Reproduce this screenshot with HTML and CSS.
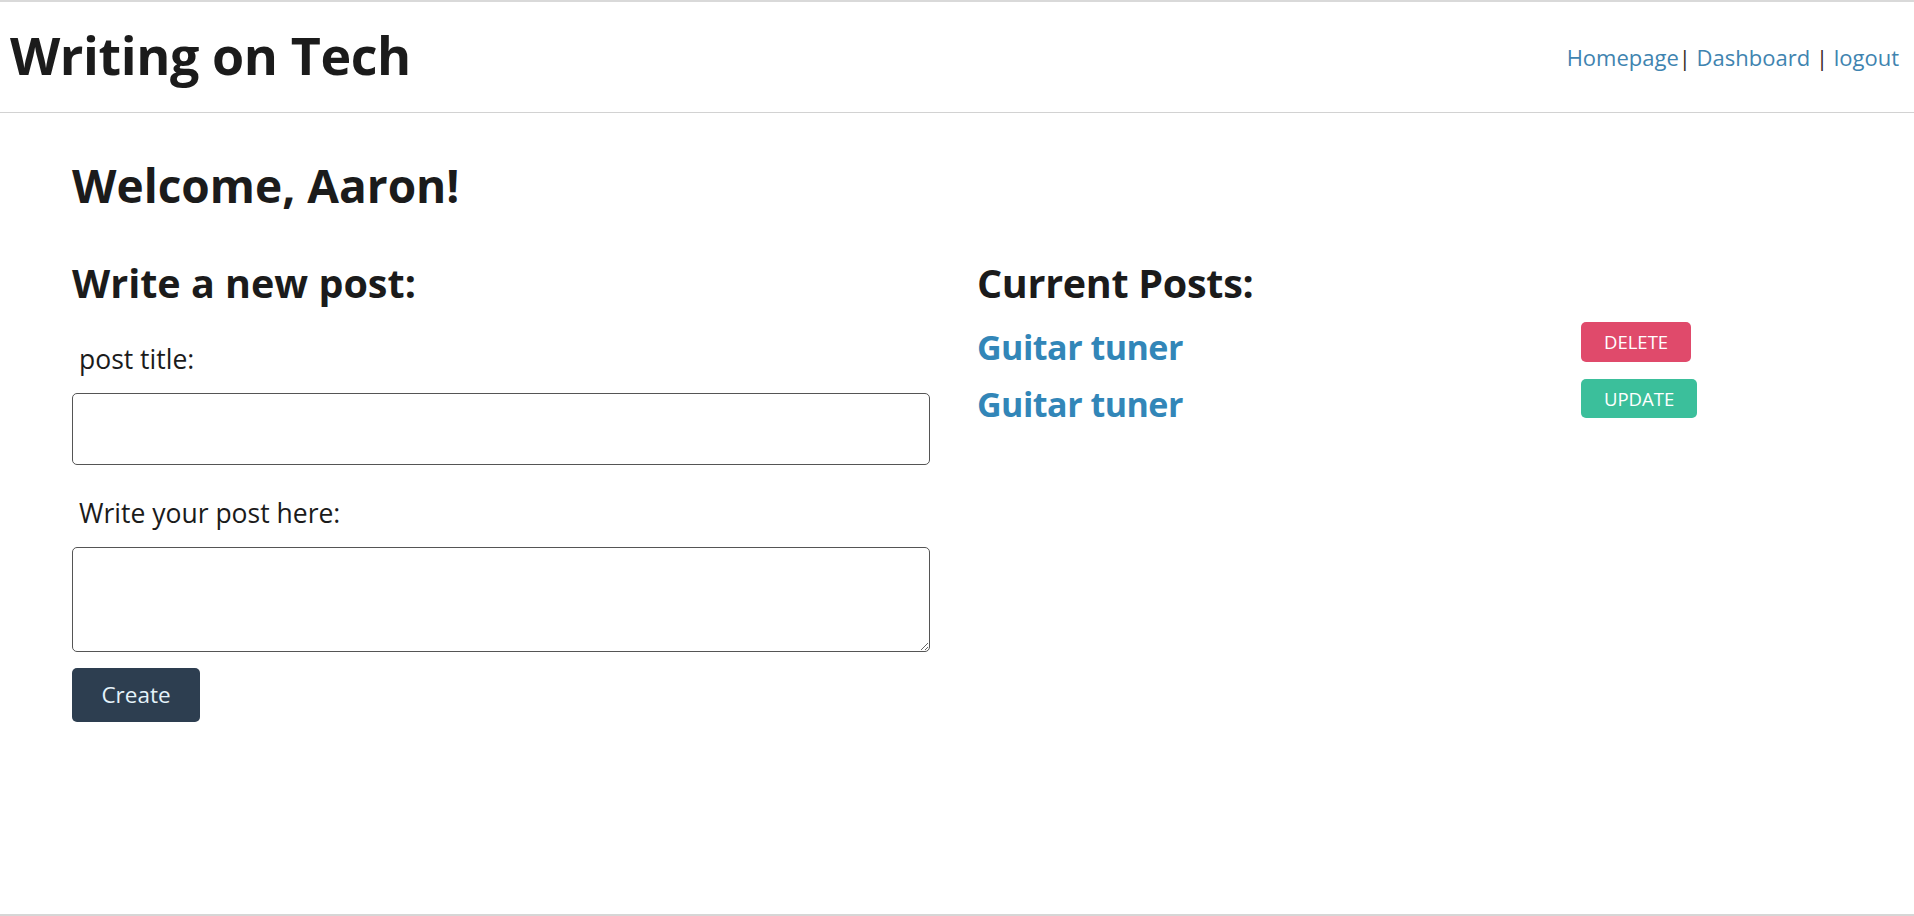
FILE: index.html
```html
<!DOCTYPE html>
<html lang="en">
<head>
<meta charset="utf-8">
<title>Writing on Tech</title>
<link rel="stylesheet" href="styles.css">
</head>
<body>
<div class="page">
  <header class="site-header">
    <h1 class="brand">Writing on Tech</h1>
    <nav class="nav">
      <a href="#" class="nav-link">Homepage</a><span class="sep">|</span> <a href="#" class="nav-link">Dashboard</a> <span class="sep">|</span> <a href="#" class="nav-link">logout</a>
    </nav>
  </header>
  <main class="main">
    <h2 class="welcome">Welcome, Aaron!</h2>
    <div class="columns">
      <section class="new-post">
        <h3 class="section-title">Write a new post:</h3>
        <form class="post-form">
          <label class="field-label label-first" for="title">post title:</label>
          <input class="field-input" id="title" type="text">
          <label class="field-label" for="body">Write your post here:</label>
          <textarea class="field-area" id="body"></textarea>
          <button type="button" class="btn-create">Create</button>
        </form>
      </section>
      <section class="current-posts">
        <h3 class="section-title">Current Posts:</h3>
        <div class="post-list">
          <div class="post-row">
            <a href="#" class="post-link">Guitar tuner</a>
            <button type="button" class="btn-small btn-delete">DELETE</button>
          </div>
          <div class="post-row">
            <a href="#" class="post-link">Guitar tuner</a>
            <button type="button" class="btn-small btn-update">UPDATE</button>
          </div>
        </div>
      </section>
    </div>
  </main>
  <footer class="site-footer"></footer>
</div>
</body>
</html>
```
FILE: styles.css
```css
html, body {
  margin: 0;
  padding: 0;
  background: #ffffff;
}
body {
  font-family: "Open Sans", "Noto Sans", sans-serif;
  color: #1b1b1b;
}
.page {
  min-height: 916px;
  display: flex;
  flex-direction: column;
  box-sizing: border-box;
}
.site-header {
  display: flex;
  justify-content: space-between;
  align-items: center;
  height: 110px;
  border-top: 2px solid #d9d9d9;
  border-bottom: 1px solid #d2d2d2;
  padding: 0 15px 0 10px;
}
.brand {
  margin: 0;
  font-size: 52px;
  font-weight: 700;
  letter-spacing: -0.4px;
  color: #1b1b1b;
  line-height: 1;
  position: relative;
  top: -2px;
}
.nav {
  font-size: 22px;
  color: #3a2a2a;
}
.nav-link {
  color: #3f84b0;
  text-decoration: none;
}
.main {
  padding: 0 72px;
}
.welcome {
  margin: 45px 0 0;
  font-size: 46px;
  font-weight: 700;
  line-height: 1.2;
}
.columns {
  display: grid;
  grid-template-columns: 858px 1fr;
  column-gap: 47px;
  margin-top: 47px;
}
.section-title {
  margin: 0;
  font-size: 39.5px;
  font-weight: 700;
  line-height: 1.2;
}
.current-posts .section-title {
  letter-spacing: -0.3px;
}
.post-form {
  display: flex;
  flex-direction: column;
  align-items: flex-start;
}
.field-label {
  font-size: 26.5px;
  padding-left: 7px;
  margin-top: 30px;
  line-height: 1.4;
}
.label-first {
  margin-top: 33px;
}
.field-input {
  box-sizing: border-box;
  width: 100%;
  height: 72px;
  margin-top: 15px;
  border: 1px solid #555;
  border-radius: 5px;
  font: inherit;
}
.field-area {
  box-sizing: border-box;
  width: 100%;
  height: 105px;
  margin-top: 15px;
  border: 1px solid #555;
  border-radius: 5px;
  font: inherit;
}
.btn-create {
  margin-top: 16px;
  width: 128px;
  height: 54px;
  background: #2d3e50;
  color: #e4f2fa;
  border: none;
  border-radius: 5px;
  font-family: inherit;
  font-size: 22.5px;
}
.post-list {
  display: flex;
  flex-direction: column;
  margin-top: 14px;
}
.post-row {
  display: grid;
  grid-template-columns: 604px auto;
  align-items: start;
  height: 57px;
}
.post-link {
  font-size: 34px;
  font-weight: 700;
  color: #3286b8;
  text-decoration: none;
  letter-spacing: -0.5px;
  line-height: 1.2;
  padding-top: 5px;
}
.btn-small {
  justify-self: start;
  height: 40px;
  padding: 0 23px;
  border: none;
  border-radius: 5px;
  color: #ffffff;
  font-family: inherit;
  font-size: 18.5px;
}
.btn-delete {
  background: #e04a6b;
}
.btn-update {
  height: 39px;
  background: #3bbf9b;
}
.site-footer {
  margin-top: auto;
  border-top: 2px solid #d6d6d6;
}
```
